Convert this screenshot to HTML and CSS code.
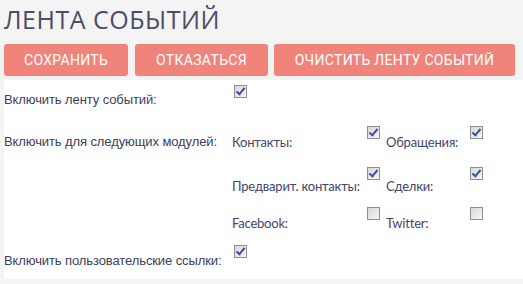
FILE: index.html
```html
<!DOCTYPE html>
<html lang="ru">
<head>
  <meta charset="UTF-8">
  <title>Лента событий</title>
  <link rel="stylesheet" href="styles.css">
</head>
<body>
  <h1 class="page-title">ЛЕНТА СОБЫТИЙ</h1>

  <!-- Action buttons -->
  <div class="actions">
    <button class="btn btn-save">СОХРАНИТЬ</button>
    <button class="btn btn-cancel">ОТКАЗАТЬСЯ</button>
    <button class="btn btn-clear">ОЧИСТИТЬ ЛЕНТУ СОБЫТИЙ</button>
  </div>

  <!-- Settings panel -->
  <section class="panel">
    <div class="row row-first">
      <div class="label">Включить ленту событий:</div>
      <div class="value"><span class="cb checked"></span></div>
    </div>

    <div class="row row-modules">
      <div class="label">Включить для следующих модулей:</div>
      <div class="modules">
        <div class="mod-label">Контакты:</div>
        <div class="mod-cb"><span class="cb checked"></span></div>
        <div class="mod-label">Обращения:</div>
        <div class="mod-cb"><span class="cb checked"></span></div>

        <div class="mod-label mod-low">Предварит. контакты:</div>
        <div class="mod-cb"><span class="cb checked"></span></div>
        <div class="mod-label mod-low">Сделки:</div>
        <div class="mod-cb"><span class="cb checked"></span></div>

        <div class="mod-label">Facebook:</div>
        <div class="mod-cb"><span class="cb"></span></div>
        <div class="mod-label">Twitter:</div>
        <div class="mod-cb"><span class="cb"></span></div>
      </div>
    </div>

    <div class="row row-links">
      <div class="label">Включить пользовательские ссылки:</div>
      <div class="value"><span class="cb checked"></span></div>
    </div>
  </section>
</body>
</html>
```

FILE: styles.css
```css
/* Page background and base font */
body {
  background-color: #f4f4f4;
  font-family: 'Liberation Sans', Arial, sans-serif;
  color: #3d3d5e;
  margin: 0;
  padding: 0 0 0 4px;
}

/* Title */
.page-title {
  font-family: 'Open Sans', sans-serif;
  font-size: 25px;
  font-weight: 400;
  color: #4d4d68;
  letter-spacing: 0.5px;
  margin: 0;
  padding-top: 2px;
  height: 42px;
}

/* Buttons row */
.actions {
  display: flex;
  gap: 7px;
  height: 36px;
}

.btn {
  background-color: #f0847a;
  color: white;
  border: none;
  border-radius: 3px;
  height: 32px;
  padding: 0 20px;
  font-family: 'Roboto', sans-serif;
  font-size: 14px;
  letter-spacing: 0.3px;
  cursor: pointer;
}

.btn-save { width: 124px; }
.btn-cancel { width: 133px; }
.btn-clear { width: 241px; margin-left: -1px; }

/* White settings panel */
.panel {
  background-color: #ffffff;
  height: 199px;
  font-size: 13px;
}

.row {
  display: grid;
  grid-template-columns: 228px 1fr;
}

.row-first { height: 41px; }
.row-modules { height: 119px; }

.label {
  padding-top: 12px;
  letter-spacing: -0.1px;
}

.row-modules .label {
  padding-top: 13px;
}

.row-links .label {
  padding-top: 13px;
}

.value {
  padding-top: 5px;
  padding-left: 2px;
}

/* Modules sub-grid */
.modules {
  display: grid;
  grid-template-columns: 135px 19px 84px 20px;
  grid-template-rows: 41px 40px 38px;
}

.mod-label {
  font-family: 'Lato', sans-serif;
  font-size: 13px;
  padding-top: 13px;
  color: #45456a;
  letter-spacing: -0.2px;
  white-space: nowrap;
}

.mod-low {
  padding-top: 16px;
}

.mod-cb {
  padding-top: 5px;
}

/* Old-style checkbox */
.cb {
  display: block;
  width: 11px;
  height: 11px;
  border: 1px solid #8e8f8f;
  background: linear-gradient(135deg, #d8d8d8, #f6f6f6);
  position: relative;
}

.cb.checked::after {
  content: "";
  position: absolute;
  left: 3px;
  top: 0px;
  width: 3px;
  height: 7px;
  border: solid #3c50a5;
  border-width: 0 2px 2px 0;
  transform: rotate(40deg);
}
```
